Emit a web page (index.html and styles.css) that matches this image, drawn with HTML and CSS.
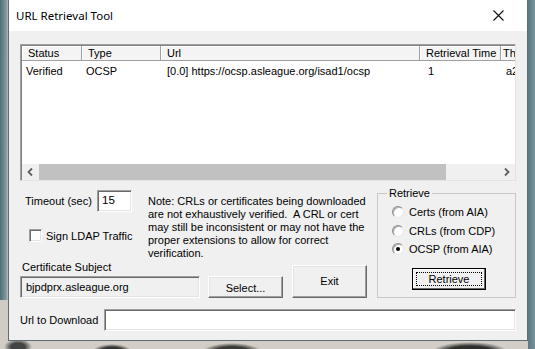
FILE: index.html
```html
<!DOCTYPE html>
<html>
<head>
<meta charset="utf-8">
<title>URL Retrieval Tool</title>
<link rel="stylesheet" href="styles.css">
</head>
<body>
<div class="desktop">
  <div class="window">
    <div class="titlebar">
      <span class="title">URL Retrieval Tool</span>
      <svg class="close" width="11" height="11" viewBox="0 0 11 11"><path d="M0.5 0.5 L10.5 10.5 M10.5 0.5 L0.5 10.5" stroke="#111" stroke-width="1.1" fill="none"/></svg>
    </div>
    <div class="client">
      <div class="list">
        <div class="list-head">
          <div class="hcell">Status</div>
          <div class="hcell">Type</div>
          <div class="hcell">Url</div>
          <div class="hcell">Retrieval Time</div>
          <div class="hcell last">Th</div>
        </div>
        <div class="list-body">
          <div class="row">
            <span class="cell c-status">Verified</span>
            <span class="cell c-type">OCSP</span>
            <span class="cell c-url">[0.0] https://ocsp.asleague.org/isad1/ocsp</span>
            <span class="cell c-time">1</span>
            <span class="cell c-last">a2</span>
          </div>
        </div>
        <div class="hscroll">
          <span class="arrow aleft"><svg width="17" height="16" viewBox="0 0 17 16"><path d="M10 4.5 L6.5 8 L10 11.5" stroke="#606060" stroke-width="1.8" fill="none"/></svg></span>
          <div class="track"><div class="thumb"></div></div>
          <span class="arrow aright"><svg width="16" height="16" viewBox="0 0 16 16"><path d="M6 4.5 L9.5 8 L6 11.5" stroke="#606060" stroke-width="1.8" fill="none"/></svg></span>
        </div>
      </div>

      <div class="lower">
        <div class="left">
          <div class="top">
            <div class="controls">
              <div class="timeout">
                <span class="lbl">Timeout (sec)</span>
                <div class="edit timeout-edit">15</div>
              </div>
              <div class="check"><span class="box"></span><span>Sign LDAP Traffic</span></div>
            </div>
            <p class="note">Note: CRLs or certificates being downloaded<br>are not exhaustively verified.&nbsp; A CRL or cert<br>may still be inconsistent or may not have the<br>proper extensions to allow for correct<br>verification.</p>
          </div>
          <div class="subject">
            <div class="sub-label">Certificate Subject</div>
            <div class="edit readonly">bjpdprx.asleague.org</div>
            <div class="btn select">Select...</div>
            <div class="btn exit">Exit</div>
          </div>
        </div>
        <fieldset class="group">
          <legend>Retrieve</legend>
          <div class="radio"><span class="rb"></span>Certs (from AIA)</div>
          <div class="radio"><span class="rb"></span>CRLs (from CDP)</div>
          <div class="radio"><span class="rb on"></span>OCSP (from AIA)</div>
          <div class="btn default"><span class="focus">Retrieve</span></div>
        </fieldset>
      </div>

      <div class="urlrow">
        <span class="url-label">Url to Download</span>
        <div class="edit url-edit"></div>
      </div>
    </div>
  </div>
</div>
</body>
</html>
```

FILE: styles.css
```css
html, body {
  margin: 0;
  padding: 0;
}
body {
  width: 535px;
  height: 349px;
  overflow: hidden;
  font-family: "Liberation Sans", Arial, sans-serif;
  font-size: 11px;
  color: #000;
}
.desktop {
  width: 535px;
  height: 349px;
  box-sizing: border-box;
  padding-left: 8px;
  background:
    linear-gradient(to right, #4f6f75 0, #6e8a8f 4px, #8ea3a6 7px, transparent 8px) left top / 8px 300px no-repeat,
    linear-gradient(to right, #5b7880 0, #7a949d 7px) right top / 7px 349px no-repeat,
    radial-gradient(ellipse 20px 8px at 112px 352px, #333 0, #333 60%, transparent 100%),
    radial-gradient(ellipse 30px 9px at 232px 352px, #3a3a3a 0, #3a3a3a 60%, transparent 100%),
    radial-gradient(ellipse 38px 10px at 470px 352px, #2e2e2e 0, #2e2e2e 60%, transparent 100%),
    radial-gradient(ellipse 14px 8px at 18px 347px, #444 0, #444 50%, transparent 100%),
    linear-gradient(#bdbab3, #d2cec7);
}
.window {
  width: 520px;
  height: 341px;
  box-sizing: border-box;
  border: 1px solid #5d6d72;
  border-top: none;
  background: #f0f0f0;
  display: flex;
  flex-direction: column;
}
.titlebar {
  height: 31px;
  flex: none;
  background: #fff;
  display: flex;
  align-items: center;
  justify-content: space-between;
  padding: 0 23px 0 7px;
}
.title {
  font-family: "Noto Sans", "Open Sans", sans-serif;
  font-size: 11.5px;
  color: #000;
}
.close {
  display: block;
  margin-top: -1px;
}
.client {
  flex: 1;
  background: #f0f0f0;
  padding: 13px 11px 0 11px;
}

/* List view */
.list {
  height: 137px;
  box-sizing: border-box;
  border: 1px solid;
  border-color: #a0a0a0 #e3e3e3 #e3e3e3 #a0a0a0;
  box-shadow: inset 1px 1px 0 #828282;
  background: #fff;
  display: flex;
  flex-direction: column;
}
.list-head {
  height: 15px;
  flex: none;
  display: grid;
  grid-template-columns: 60px 79px 259px 81px 1fr;
  background: #f4f4f4;
  margin: 1px 0 0 1px;
}
.hcell {
  border-right: 1px solid #a0a0a0;
  border-bottom: 1px solid #a0a0a0;
  box-shadow: inset 1px 1px 0 #fff;
  padding-left: 6px;
  line-height: 14px;
  white-space: nowrap;
  overflow: hidden;
}
.hcell.last {
  border-right: none;
  padding-left: 2px;
}
.list-body {
  flex: 1;
  min-height: 0;
  padding-top: 2px;
  margin-left: 1px;
}
.row {
  display: grid;
  grid-template-columns: 60px 79px 259px 81px 1fr;
  height: 16px;
  line-height: 16px;
  white-space: nowrap;
}
.cell { overflow: hidden; }
.c-status { padding-left: 4px; }
.c-type { padding-left: 4px; }
.c-url { padding-left: 6px; }
.c-time { padding-left: 8px; }
.c-last { padding-left: 5px; }

.hscroll {
  height: 16px;
  flex: none;
  display: flex;
  background: #f0f0f0;
  margin-left: 1px;
}
.arrow {
  flex: none;
  height: 16px;
}
.aleft { width: 17px; }
.aright { width: 16px; }
.arrow svg { display: block; }
.track {
  flex: 1;
  height: 16px;
  background: #f0f0f0;
}
.thumb {
  width: 407px;
  height: 16px;
  background: #c1c1c1;
}

/* Lower area */
.lower {
  display: flex;
  margin-top: 6px;
}
.left {
  width: 347px;
  display: flex;
  flex-direction: column;
}
.top {
  height: 72px;
  display: flex;
}
.controls {
  width: 128px;
  flex: none;
}
.timeout {
  display: flex;
  align-items: center;
  margin-top: 3px;
  height: 22px;
}
.lbl {
  width: 72px;
  padding-left: 5px;
  white-space: nowrap;
}
.edit {
  box-sizing: border-box;
  height: 22px;
  background: #fff;
  border: 1px solid;
  border-color: #a0a0a0 #fff #fff #a0a0a0;
  box-shadow: inset 1px 1px 0 #696969, inset -1px -1px 0 #e3e3e3;
  white-space: nowrap;
}
.timeout-edit {
  width: 35px;
  padding: 1px 0 0 4px;
  font-size: 11.5px;
  line-height: 16px;
}
.check {
  display: flex;
  align-items: center;
  margin-top: 17px;
  margin-left: 9px;
  height: 13px;
  white-space: nowrap;
}
.box {
  width: 13px;
  height: 13px;
  box-sizing: border-box;
  background: #fff;
  border: 1px solid;
  border-color: #a0a0a0 #fff #fff #a0a0a0;
  box-shadow: inset 1px 1px 0 #696969, inset -1px -1px 0 #e3e3e3;
  margin-right: 4px;
}
.note {
  margin: 8px 0 0 0;
  line-height: 13px;
  white-space: nowrap;
}
.subject {
  display: grid;
  grid-template-columns: 180px 8px 75px 9px 75px;
  grid-template-rows: 17px 22px;
}
.sub-label {
  grid-column: 1;
  grid-row: 1;
  padding-left: 2px;
  line-height: 17px;
  white-space: nowrap;
}
.readonly {
  grid-column: 1;
  grid-row: 2;
  background: #f0f0f0;
  padding: 0 0 0 5px;
  line-height: 20px;
}
.btn {
  box-sizing: border-box;
  background: #f0f0f0;
  border: 1px solid;
  border-color: #fff #696969 #696969 #fff;
  box-shadow: inset -1px -1px 0 #a0a0a0, inset 1px 1px 0 #e3e3e3;
  display: flex;
  align-items: center;
  justify-content: center;
  white-space: nowrap;
}
.select {
  grid-column: 3;
  grid-row: 2;
  padding-top: 1px;
}
.exit {
  grid-column: 5;
  grid-row: 1 / 3;
  align-self: end;
  height: 33px;
  padding-bottom: 2px;
}

/* Group box */
.group {
  width: 139px;
  height: 111px;
  box-sizing: border-box;
  margin: 0 0 0 10px;
  padding: 0 0 0 14px;
  border: 1px solid #c8c8c8;
  min-width: 0;
}
.group legend {
  margin-left: -5px;
  padding: 0 2px;
  line-height: 13px;
}
.radio {
  display: flex;
  align-items: center;
  height: 18.5px;
  white-space: nowrap;
}
.radio:first-of-type { margin-top: 3px; }
.rb {
  position: relative;
  width: 12px;
  height: 12px;
  box-sizing: border-box;
  border-radius: 50%;
  background: #fff;
  border: 1px solid;
  border-color: #8c8c8c #e8e8e8 #e8e8e8 #8c8c8c;
  box-shadow: inset 1px 1px 0 #b0b0b0;
  margin-right: 5px;
}
.rb.on::after {
  content: "";
  position: absolute;
  left: 3px;
  top: 3px;
  width: 4px;
  height: 4px;
  border-radius: 50%;
  background: #000;
}
.default {
  width: 74px;
  height: 22px;
  margin: 9px 0 0 20px;
  border: 1px solid #000;
  box-shadow: inset -1px -1px 0 #696969, inset 1px 1px 0 #fff;
  padding: 3px;
}
.focus {
  flex: 1;
  align-self: stretch;
  display: flex;
  align-items: center;
  justify-content: center;
  border: 1px dotted #000;
}

/* Url row */
.urlrow {
  display: flex;
  align-items: center;
  margin-top: 11px;
}
.url-label {
  width: 84px;
  white-space: nowrap;
}
.url-edit {
  width: 412px;
}
```
